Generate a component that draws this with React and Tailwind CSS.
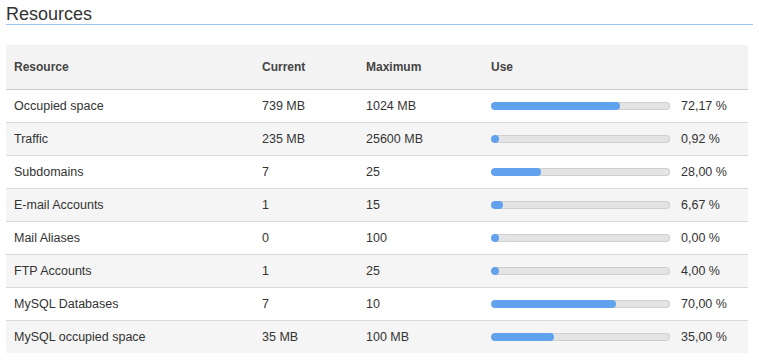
const rows = [
  { name: 'Occupied space', current: '739 MB', max: '1024 MB', pct: 72.17, label: '72,17 %' },
  { name: 'Traffic', current: '235 MB', max: '25600 MB', pct: 0.92, label: '0,92 %' },
  { name: 'Subdomains', current: '7', max: '25', pct: 28, label: '28,00 %' },
  { name: 'E-mail Accounts', current: '1', max: '15', pct: 6.67, label: '6,67 %' },
  { name: 'Mail Aliases', current: '0', max: '100', pct: 0, label: '0,00 %' },
  { name: 'FTP Accounts', current: '1', max: '25', pct: 4, label: '4,00 %' },
  { name: 'MySQL Databases', current: '7', max: '10', pct: 70, label: '70,00 %' },
  { name: 'MySQL occupied space', current: '35 MB', max: '100 MB', pct: 35, label: '35,00 %' },
];

function Bar({ pct }) {
  return (
    <div className="h-2 w-[179px] rounded-full bg-[#e4e4e4] shadow-[inset_0_0_0_1px_#cfcfcf] overflow-hidden">
      <div
        className="h-2 min-w-2 rounded-full bg-[#60a2ee]"
        style={{ width: `${pct}%` }}
      />
    </div>
  );
}

export default function App() {
  return (
    <div className="bg-white w-[759px] h-[364px] px-[6px] pt-[4px] text-[#333] font-['Liberation_Sans',Arial,sans-serif]">
      <h2 className="text-[18px] leading-[20px] border-b border-[#9cc6f0]">Resources</h2>

      <table className="mt-[20px] w-[742px] table-fixed border-collapse text-[12.5px]">
        <thead>
          <tr className="bg-[#f3f3f3] h-[44px] border-b border-[#cdcdcd]">
            <th className="w-[248px] px-2 text-left text-[12px] font-bold text-[#444]">Resource</th>
            <th className="w-[104px] px-2 text-left text-[12px] font-bold text-[#444]">Current</th>
            <th className="w-[125px] px-2 text-left text-[12px] font-bold text-[#444]">Maximum</th>
            <th className="px-2 text-left text-[12px] font-bold text-[#444]">Use</th>
          </tr>
        </thead>
        <tbody>
          {rows.map((r, i) => (
            <tr
              key={r.name}
              className={`h-[33px] ${i < rows.length - 1 ? 'border-b border-[#d9d9d9]' : ''} ${i % 2 ? 'bg-[#f5f5f5]' : 'bg-white'}`}
            >
              <td className="px-2 pt-px">{r.name}</td>
              <td className="px-2 pt-px">{r.current}</td>
              <td className="px-2 pt-px">{r.max}</td>
              <td className="px-2">
                <div className="flex items-center gap-[11px]">
                  <Bar pct={r.pct} />
                  <span className="pt-px">{r.label}</span>
                </div>
              </td>
            </tr>
          ))}
        </tbody>
      </table>
    </div>
  );
}
